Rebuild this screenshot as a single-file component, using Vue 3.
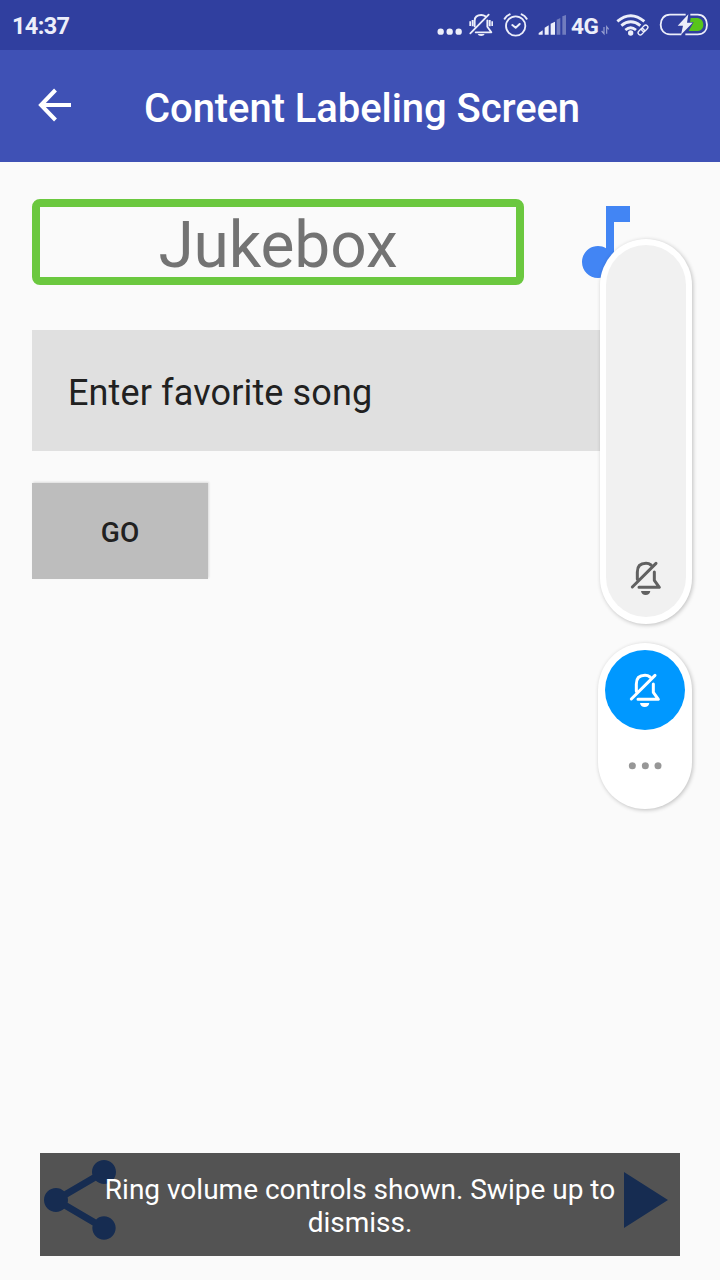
<script setup>
const signalBars = [
  { d: 'M326 104V99L338 91V104Z', o: 1 },
  { d: 'M344 104V83L356 76V104Z', o: 1 },
  { d: 'M362 104V71L375 65V104Z', o: 1 },
  { d: 'M380 104V59L391 54V104Z', o: 0.35 },
  { d: 'M397 104V49L408 45V104Z', o: 0.35 },
]
const dots = [127, 166, 204]
</script>

<template>
  <div class="screen">
    <header class="status">
      <span class="clock">14:37</span>
      <svg class="status-left" viewBox="0 0 423 150">
        <g fill="#eceefa">
          <circle cx="32" cy="95" r="9.5" /><circle cx="59" cy="95" r="9.5" /><circle cx="86" cy="95" r="9.5" />
          <path d="M143 102h21q-2 6-10.500 6t-10.500-6z" />
          <path d="M118 64h5v14h-5zM125 60h6v19h-6zM176 60h6v19h-6zM184 64h5v14h-5z" />
          <path v-for="b in signalBars" :key="b.d" :d="b.d" :opacity="b.o" />
        </g>
        <g fill="none" stroke="#eceefa" stroke-width="5.500" stroke-linecap="round" stroke-linejoin="round">
          <path d="M134 79V62C134 50 143 45 154 45q7 0 12 4M172 61v19l12 17H137M121 100L176 44" />
          <circle cx="257" cy="78" r="29" />
          <path d="M247 75l10 8 12-11M224 56q5-9 15-13M290 56q-5-9-15-13" stroke-width="6" />
        </g>
      </svg>
      <span class="network">4G</span>
      <svg class="status-right" viewBox="102 0 363 150">
        <g fill="none" stroke="#eceefa">
          <path d="M117 81v20l-7-8M125 101V80l6 8" stroke-width="3.500" opacity=".55" />
          <path d="M157 64Q197 30 238 64M169 77Q197 54 226 77M181 90Q197 77 213 90" stroke-width="8.500" />
          <g transform="translate(234 90) rotate(-45)" stroke-width="4">
            <rect x="-18" y="-6.500" width="21" height="13" rx="6.500" />
            <rect x="-3" y="-6.500" width="21" height="13" rx="6.500" />
          </g>
          <path d="M349 103H315C297 103 287 90 287 74S297 44 315 44H362M376 44H398C416 44 426 57 426 74S416 103 398 103H361" stroke-width="5.500" />
        </g>
        <circle cx="197" cy="99" r="8" fill="#eceefa" />
        <path d="M377 54H394C407 54 415 62 415 74S407 93 394 93H371L386 67H375Z" fill="#58c51b" />
        <path d="M370 43L338 77H354L348 104L383 68H366Z" fill="#eceefa" />
      </svg>
    </header>

    <nav class="appbar">
      <svg class="back" viewBox="0 0 34 34"><path d="M33 17H3M17.500 2L3 17L17.500 32" fill="none" stroke="#fff" stroke-width="4" /></svg>
      <h1>Content Labeling Screen</h1>
    </nav>

    <main>
      <div class="heading">
        <div class="label"><span>Jukebox</span></div>
        <svg class="note" viewBox="0 0 24 24"><path fill="#4285f4" d="M12 3v10.550c-.59-.34-1.270-.55-2-.55-2.210 0-4 1.790-4 4s1.790 4 4 4 4-1.790 4-4V7h4V3h-6z" /></svg>
      </div>
      <div class="field">Enter favorite song</div>
      <button class="go">GO</button>
    </main>

    <footer class="actions">
      <svg viewBox="0 0 24 24"><path fill="#4285f4" d="M18 16.080c-.76 0-1.440.3-1.960.77L8.910 12.700c.05-.23.09-.46.09-.7s-.04-.47-.09-.7l7.050-4.110c.54.5 1.250.81 2.040.81 1.660 0 3-1.340 3-3s-1.340-3-3-3-3 1.340-3 3c0 .24.04.47.09.7L8.040 9.810C7.500 9.310 6.790 9 6 9c-1.660 0-3 1.340-3 3s1.340 3 3 3c.79 0 1.500-.31 2.040-.81l7.120 4.160c-.05.21-.08.43-.08.65 0 1.610 1.310 2.920 2.920 2.920s2.920-1.310 2.920-2.920-1.310-2.920-2.920-2.920z" /></svg>
      <svg viewBox="0 0 24 24"><path fill="#4285f4" d="M8 5v14l11-7z" /></svg>
    </footer>

    <aside class="volume">
      <div class="slider">
        <div class="track">
          <svg class="bell" viewBox="120 60 96 108">
            <g fill="none" stroke="#616161" stroke-width="9" stroke-linecap="round" stroke-linejoin="round">
              <path d="M142 118V96C142 78 152 70 168 70Q177 70 183 75M193 96V121L208 142H147M127 141L198 70" />
            </g>
            <path d="M153 153h28q-2 12-14 12t-14-12z" fill="#616161" />
          </svg>
        </div>
      </div>
      <div class="modes">
        <div class="mode">
          <svg class="bell" viewBox="120 60 96 108">
            <g fill="none" stroke="#fff" stroke-width="9" stroke-linecap="round" stroke-linejoin="round">
              <path d="M142 118V96C142 78 152 70 168 70Q177 70 183 75M193 96V121L208 142H147M127 141L198 70" />
            </g>
            <path d="M153 153h28q-2 12-14 12t-14-12z" fill="#fff" />
          </svg>
        </div>
        <svg class="more" viewBox="114 668 102 24"><circle v-for="x in dots" :key="x" :cx="x" cy="679.500" r="10.500" fill="#979797" /></svg>
      </div>
    </aside>

    <div class="toast">Ring volume controls shown. Swipe up to dismiss.</div>
  </div>
</template>

<style>
body { margin: 0; }
</style>

<style scoped>
.screen {
  position: relative;
  width: 720px;
  height: 1280px;
  overflow: hidden;
  display: flex;
  flex-direction: column;
  background: #fafafa;
  font-family: Roboto, "Liberation Sans", sans-serif;
  color: #212121;
}
svg { display: block; flex: none; }
.status { height: 50px; display: flex; background: #303f9f; color: #eceefa; flex: none; }
.clock { width: 418px; padding-left: 12px; font-size: 23.500px; font-weight: 700; line-height: 52px; letter-spacing: -0.65px; }
.status-left { width: 141px; height: 50px; }
.network { width: 28px; white-space: nowrap; font-size: 22.500px; font-weight: 700; line-height: 53px; letter-spacing: -0.300px; }
.status-right { width: 121px; height: 50px; }
.appbar { height: 112px; flex: none; display: flex; align-items: center; background: #3f51b5; color: #fff; }
.back { width: 34px; height: 34px; margin: 0 0 2px 38px; }
h1 { margin: 6px 0 0 72px; font-size: 40px; font-weight: 500; line-height: 48px; letter-spacing: -0.070px; white-space: nowrap; }
main { padding: 32px 32px 0; }
.heading { display: flex; height: 96px; }
.label {
  box-sizing: border-box;
  width: 492px;
  height: 86px;
  margin-top: 5px;
  border: 8px solid #6bc83f;
  border-radius: 8px;
  text-align: center;
  color: #737373;
  font-size: 64px;
  line-height: 78px;
  letter-spacing: -0.100px;
}
.note { width: 96px; height: 96px; margin-left: 34px; }
.field { box-sizing: border-box; height: 121px; margin-top: 40px; padding: 0 36px; background: #e0e0e0; font-size: 36px; line-height: 126px; letter-spacing: 0.130px; }
.go {
  display: block;
  width: 176px;
  height: 96px;
  margin-top: 32px;
  padding: 2px 0 0;
  border: 0;
  background: #bdbdbd;
  box-shadow: 1px -1px 2px rgba(0, 0, 0, 0.12);
  color: #212121;
  font: 500 28px Roboto, sans-serif;
}
.actions { display: flex; justify-content: space-between; margin-top: auto; padding: 0 32px 32px; }
.actions svg { width: 96px; height: 96px; }
.volume { position: absolute; left: 598px; top: 239px; width: 94px; display: flex; flex-direction: column; }
.slider, .modes { box-sizing: border-box; background: #fff; border-radius: 47px; box-shadow: 1px 1px 4px rgba(0, 0, 0, 0.24); }
.slider { width: 92px; height: 385px; margin-left: 2px; padding: 6px; }
.track { box-sizing: border-box; height: 372px; border-radius: 40px; background: #f1f1f1; display: flex; justify-content: center; align-items: flex-end; padding-bottom: 21px; }
.bell { width: 32px; height: 36px; }
.modes { width: 94px; height: 166px; margin-top: 19px; padding: 7px; display: flex; flex-direction: column; align-items: center; }
.mode { width: 80px; height: 80px; border-radius: 50%; background: #0098ff; display: flex; align-items: center; justify-content: center; }
.more { width: 34px; height: 8px; margin-top: 32px; }
.toast {
  position: absolute;
  left: 40px;
  top: 1153px;
  box-sizing: border-box;
  width: 640px;
  height: 103px;
  padding: 20px 60px 0;
  background: rgba(0, 0, 0, 0.667);
  color: #fff;
  font-size: 28px;
  line-height: 33px;
  text-align: center;
}
</style>
